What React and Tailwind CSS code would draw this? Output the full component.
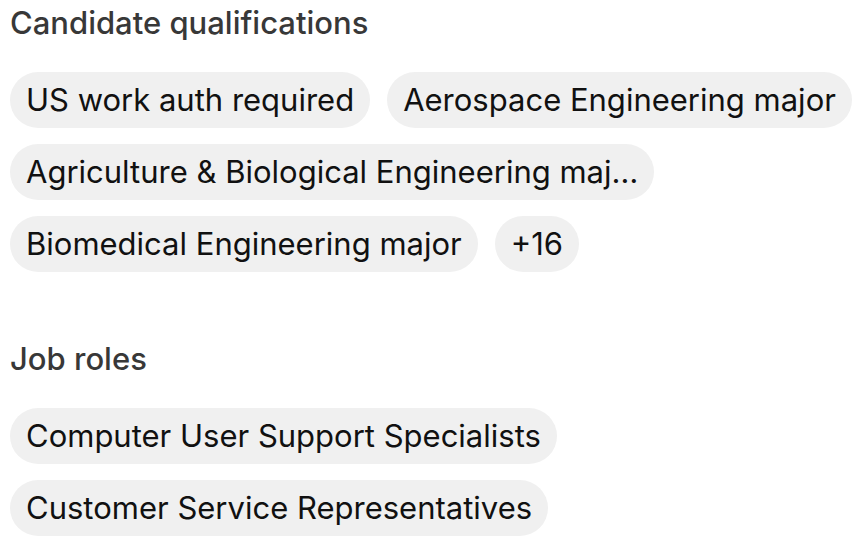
import React from 'react';

const qualifications = [
  'US work auth required',
  'Aerospace Engineering major',
  'Agriculture & Biological Engineering maj…',
  'Biomedical Engineering major',
  '+16',
];

const jobRoles = ['Computer User Support Specialists', 'Customer Service Representatives'];

const Chip = ({ label }) => (
  <span className="inline-flex items-center h-[56px] px-4 rounded-full bg-[#f0f0f0] text-[31px] leading-[36px] text-[#111111] whitespace-nowrap">
    {label}
  </span>
);

const Section = ({ title, items }) => (
  <div>
    <h2 className="text-[31px] leading-[36px] font-medium text-[#383838]">{title}</h2>
    <div className="mt-[31px] flex flex-wrap gap-x-[17px] gap-y-4">
      {items.map((item) => (
        <Chip key={item} label={item} />
      ))}
    </div>
  </div>
);

const App = () => {
  return (
    <div className="w-[862px] h-[554px] overflow-hidden bg-white px-[10px] pt-[5px] font-['Inter',sans-serif]">
      <Section title="Candidate qualifications" items={qualifications} />
      <div className="mt-[69px]">
        <Section title="Job roles" items={jobRoles} />
      </div>
    </div>
  );
};

export default App;
